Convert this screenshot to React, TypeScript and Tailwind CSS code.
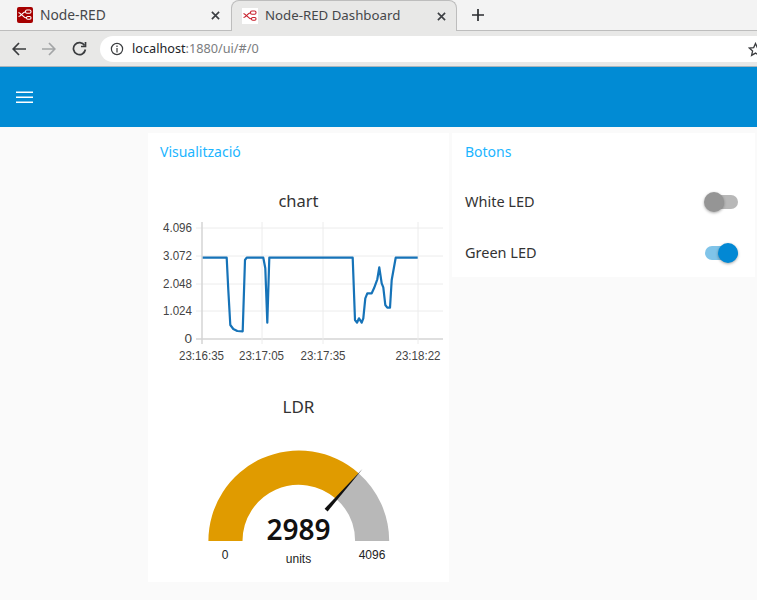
const line = "158,233 230,233 235,330 241,435 250,447 262,453 278,454 285,240 290,233 340,233 346,265 352,428 358,233 608,233 615,420 621,428 627,415 635,428 640,415 646,355 652,340 665,340 672,325 682,298 688,262 695,310 700,322 706,375 712,383 720,383 725,300 737,233 803,233"
  .split(" ")
  .map((p) => {
    const [x, y] = p.split(",").map(Number);
    return `${(150 + x / 3).toFixed(1)},${(180 + y / 3).toFixed(1)}`;
  })
  .join(" ");

const FlowIcon = ({ color }: { color: string }) => (
  <svg width="16" height="16" viewBox="0 0 16 16" fill="none" stroke={color} strokeWidth="1.1">
    <rect x="8.5" y="3" width="5.5" height="3.2" rx="1.4" />
    <rect x="9.5" y="9.5" width="4.5" height="2.8" rx="1.2" />
    <path d="M1.5 9.5 C4 9.5 5.5 5 8.5 4.8" />
    <path d="M1.5 5.5 C4 6 6 10.5 9.5 11" />
  </svg>
);

const Close = () => (
  <svg width="9" height="9" viewBox="0 0 10 10" stroke="#3c3f43" strokeWidth="1.8">
    <path d="M1 1 L9 9 M9 1 L1 9" />
  </svg>
);

function Toggle({ on }: { on: boolean }) {
  return (
    <div className={`flex w-[34px] h-5 items-center relative ${on ? "justify-end" : "justify-start"}`}>
      <div className={`absolute left-[1px] right-0 h-[14px] rounded-full ${on ? "bg-[#80c4e9]" : "bg-[#b8b8b8]"}`} />
      <div
        className={`relative w-5 h-5 rounded-full shadow-[0_1px_3px_rgba(0,0,0,0.35)] ${
          on ? "bg-[#0288d4]" : "bg-[#959595]"
        }`}
      />
    </div>
  );
}

export default function App() {
  const font = { fontFamily: "'Noto Sans', sans-serif" };
  return (
    <div className="w-[757px] h-[600px] overflow-hidden bg-[#fafafa] flex flex-col font-['Noto_Sans',sans-serif]">
      {/* tab strip */}
      <div className="flex h-[31px] bg-[#f3f3f3] text-[#45474a]">
        <div className="w-[231px] flex items-center pl-[17px] pr-[11px] border-b border-[#bdbdbd] text-[13.8px]">
          <div className="w-4 h-4 rounded-[2px] bg-[#a60000] flex items-center justify-center">
            <FlowIcon color="#ffffff" />
          </div>
          <span className="ml-[7px] flex-1">Node-RED</span>
          <Close />
        </div>
        <div className="w-[226px] flex items-center pl-[10px] pr-[10px] bg-[#e8e8e7] rounded-t-[8px] border-x border-t border-[#bdbdbd] text-[13.25px]">
          <div className="w-4 h-4 bg-white flex items-center justify-center">
            <FlowIcon color="#c8202c" />
          </div>
          <span className="ml-[7px] flex-1">Node-RED Dashboard</span>
          <Close />
        </div>
        <div className="flex-1 flex items-center pl-[15px] border-b border-[#bdbdbd]">
          <svg width="12" height="12" viewBox="0 0 12 12" stroke="#2b2d30" strokeWidth="1.7">
            <path d="M6 0 V12 M0 6 H12" />
          </svg>
        </div>
      </div>
      {/* toolbar */}
      <div className="flex h-[36px] items-center bg-[#e8e8e7] border-b border-[#a9b4bb] pl-[12px]">
        <svg width="14" height="14" viewBox="0 0 14 14" fill="none" stroke="#3a3c3f" strokeWidth="1.7">
          <path d="M14 7 H1.5 M7 1 L1.2 7 L7 13" />
        </svg>
        <svg className="ml-[16px]" width="14" height="14" viewBox="0 0 14 14" fill="none" stroke="#a3a5a7" strokeWidth="1.7">
          <path d="M0 7 H12.5 M7 1 L12.8 7 L7 13" />
        </svg>
        <svg className="ml-[16px]" width="15" height="15" viewBox="0 0 15 15" fill="none" stroke="#3a3c3f" strokeWidth="1.7">
          <path d="M12.6 4.5 A6 6 0 1 0 13.4 8.5" />
          <path d="M13.5 1 V5.5 H9" />
        </svg>
        <div className="ml-[13px] flex-1 h-[26px] bg-white rounded-l-full flex items-center pl-[10px] relative">
          <svg width="14" height="14" viewBox="0 0 14 14" fill="none" stroke="#3a3c3f" strokeWidth="1.2">
            <circle cx="7" cy="7" r="5.6" />
            <path d="M7 6 V10.5 M7 3.5 V5" />
          </svg>
          <span className="ml-[8px] text-[12.7px] text-[#222428]">
            localhost<span className="text-[#7b7d80]">:1880/ui/#/0</span>
          </span>
          <svg className="absolute right-[-6px] top-[6px]" width="15" height="15" viewBox="0 0 15 15" fill="none" stroke="#3a3c3f" strokeWidth="1.3">
            <path d="M7.5 1.5 L9.3 5.6 L13.8 6 L10.4 9 L11.4 13.4 L7.5 11.1 L3.6 13.4 L4.6 9 L1.2 6 L5.7 5.6 Z" />
          </svg>
        </div>
      </div>
      {/* header */}
      <div className="h-[60px] bg-[#018bd4] flex items-center pl-[16px] shrink-0">
        <svg width="17" height="14" viewBox="0 0 17 14" stroke="#ffffff" strokeWidth="1.6">
          <path d="M0 2.3 H17 M0 7.3 H17 M0 12.3 H17" />
        </svg>
      </div>
      {/* content */}
      <div className="flex items-start pl-[148px] pt-[6px] gap-[3px]">
        <div className="w-[301px] h-[449px] bg-white">
          <div className="pl-[12px] pt-[9px] text-[14px] leading-[20px] text-[#1bb5ff]">Visualització</div>
          <svg width="300" height="190" viewBox="150 180 300 190" className="block mt-[18px] ml-[2px]" style={font}>
            <text x="298.5" y="207" textAnchor="middle" fontSize="16.5" fill="#333">chart</text>
            {[228, 256, 284, 311, 339].map((y) => (
              <line key={y} x1="196" x2="443" y1={y} y2={y} stroke={y === 339 ? "#d5d5d5" : "#ececec"} strokeWidth={y === 339 ? 1.5 : 1} />
            ))}
            {[202, 262, 323, 418].map((x) => (
              <line key={x} x1={x} x2={x} y1="222" y2="344" stroke={x === 202 ? "#d5d5d5" : "#ececec"} strokeWidth={x === 202 ? 1.5 : 1} />
            ))}
            <g fontFamily="'Liberation Sans', sans-serif" fontSize="13.5" fill="#444">
              {[["4.096", 231.5], ["3.072", 259.5], ["2.048", 287.5], ["1.024", 314.5], ["0", 342.5]].map(([t, y]) => (
                <text key={t} x="192" y={y} textAnchor="end" textLength={t === "0" ? undefined : 29} lengthAdjust="spacingAndGlyphs">{t}</text>
              ))}
              {[["23:16:35", 201.5], ["23:17:05", 261.5], ["23:17:35", 323], ["23:18:22", 418]].map(([t, x]) => (
                <text key={t} x={x} y="359.5" textAnchor="middle" textLength="45" lengthAdjust="spacingAndGlyphs">{t}</text>
              ))}
            </g>
            <polyline points={line} fill="none" stroke="#1673b8" strokeWidth="2.2" strokeLinejoin="round" />
          </svg>
          <svg width="300" height="190" viewBox="150 390 300 190" className="block ml-[2px] mt-[20px]" style={font}>
            <text x="298.5" y="413" textAnchor="middle" fontSize="17" fill="#333">LDR</text>
            <path d="M208.4 541 A90.4 90.4 0 0 1 358.6 473.2 L336 498.8 A56.3 56.3 0 0 0 242.5 541 Z" fill="#e09b00" />
            <path d="M358.6 473.2 A90.4 90.4 0 0 1 389.2 541 L355.1 541 A56.3 56.3 0 0 0 336 498.8 Z" fill="#b8b8b8" />
            <polygon points="324.6,508.7 327.6,511.4 362.5,469" fill="#111" />
            <text x="298.5" y="539.5" textAnchor="middle" fontSize="28" fontWeight="600" fill="#111">2989</text>
            <text x="298.5" y="563" textAnchor="middle" fontSize="12" fontFamily="'Liberation Sans', sans-serif" fill="#222">units</text>
            <text x="225" y="559" textAnchor="middle" fontSize="12" fontFamily="'Liberation Sans', sans-serif" fill="#222">0</text>
            <text x="372" y="559" textAnchor="middle" fontSize="12" fontFamily="'Liberation Sans', sans-serif" fill="#222">4096</text>
          </svg>
        </div>
        <div className="w-[303px] h-[144px] bg-white pl-[13px] pr-[17px]">
          <div className="pt-[9px] text-[14px] leading-[20px] text-[#1bb5ff]">Botons</div>
          <div className="flex items-center justify-between mt-[28px] h-[24px] text-[14.5px] text-[#333]">
            <span>White LED</span>
            <Toggle on={false} />
          </div>
          <div className="flex items-center justify-between mt-[27px] h-[24px] text-[14.5px] text-[#333]">
            <span>Green LED</span>
            <Toggle on={true} />
          </div>
        </div>
      </div>
    </div>
  );
}
